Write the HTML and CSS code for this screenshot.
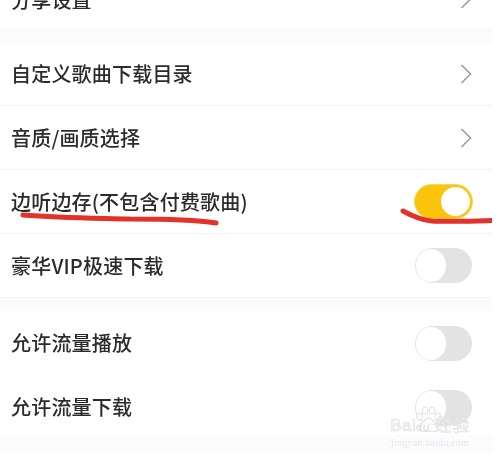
FILE: index.html
```html
<!DOCTYPE html>
<html lang="zh-CN">
<head>
<meta charset="utf-8">
<title>设置</title>
<link rel="stylesheet" href="styles.css">
</head>
<body>
<main class="screen">
  <div class="row row-cut">
    <span class="label">分享设置</span>
    <svg class="chev" viewBox="0 0 12 20"><path d="M1.500 1 10.500 10 1.500 19"/></svg>
  </div>
  <div class="band"></div>
  <div class="row row-line row-top">
    <span class="label">自定义歌曲下载目录</span>
    <svg class="chev" viewBox="0 0 12 20"><path d="M1.500 1 10.500 10 1.500 19"/></svg>
  </div>
  <div class="row row-line">
    <span class="label">音质/画质选择</span>
    <svg class="chev" viewBox="0 0 12 20"><path d="M1.500 1 10.500 10 1.500 19"/></svg>
  </div>
  <div class="row row-line">
    <span class="label">边听边存(不包含付费歌曲)</span>
    <span class="toggle on"><span class="knob"></span></span>
  </div>
  <div class="row row-line">
    <span class="label">豪华VIP极速下载</span>
    <span class="toggle"><span class="knob"></span></span>
  </div>
  <div class="band band-short"></div>
  <div class="row">
    <span class="label">允许流量播放</span>
    <span class="toggle"><span class="knob"></span></span>
  </div>
  <div class="row row-last">
    <span class="label">允许流量下载</span>
    <span class="toggle"><span class="knob"></span></span>
  </div>
  <div class="band band-tail"></div>
  <svg class="ink" viewBox="0 0 492 460" aria-hidden="true">
    <path d="M23 215C60 218 90 218 130 219 160 219 190 219 216 223"/>
    <path d="M403 211C412 216 420 220 432 221 450 222 470 221 492 220.500"/>
  </svg>
  <div class="mark">
    <svg class="paw" viewBox="0 0 40 38" aria-hidden="true">
      <ellipse cx="8" cy="15" rx="4" ry="5"/><ellipse cx="16" cy="6" rx="4" ry="5"/>
      <ellipse cx="26" cy="6" rx="4" ry="5"/><ellipse cx="34" cy="15" rx="4" ry="5"/>
      <path d="M21 17C15 17 13 24 9 27 5 31 9 37 15 36 19 35 23 35 27 36 33 37 37 31 33 27 29 24 27 17 21 17Z"/>
    </svg>
    <div class="mark-main">Bai<span class="du">du</span> 经验</div>
    <div class="mark-sub">jingyan.baidu.com</div>
  </div>
</main>
</body>
</html>
```
FILE: styles.css
```css
html, body {
  margin: 0;
  padding: 0;
  background: #fff;
}
.screen {
  position: relative;
  width: 502px;
  height: 460px;
  overflow: hidden;
  background: #fff;
  font-family: "Noto Sans CJK SC", "Noto Sans", sans-serif;
  filter: blur(0.4px);
}
.band {
  width: 492px;
  height: 15px;
  background: #fbfbfb;
}
.band-short {
  height: 13px;
}
.band-tail {
  height: 18px;
  background: #fcfbfd;
}
.row {
  display: flex;
  flex: none;
  align-items: center;
  justify-content: space-between;
  box-sizing: border-box;
  width: 492px;
  height: 64px;
  padding: 0 20px 0 11px;
  background: #fff;
}
.row-line {
  border-bottom: 1px solid #f3f3f3;
}
.row-top {
  height: 63px;
}
.row-cut {
  height: 28px;
  overflow: hidden;
  align-items: flex-start;
}
.row-cut .label {
  margin-top: -14px;
}
.row-cut .chev {
  margin-top: -11px;
}
.row-last {
  height: 60px;
  padding-top: 4px;
}
.label {
  font-size: 20px;
  font-weight: 500;
  line-height: 28px;
  color: #2b2b2b;
  letter-spacing: 0.2px;
  white-space: nowrap;
}
.chev {
  flex: none;
  width: 12px;
  height: 20px;
  fill: none;
  stroke: #a0a0a0;
  stroke-width: 1.7;
}
.toggle {
  display: flex;
  flex: none;
  justify-content: flex-start;
  box-sizing: border-box;
  width: 57px;
  height: 35px;
  border-radius: 18px;
  background: #e3e3e3;
  padding: 1px;
}
.knob {
  width: 30px;
  height: 33px;
  border-radius: 50%;
  background: #fff;
}
.toggle.on {
  justify-content: flex-end;
  width: 59px;
  margin-right: -1px;
  background: #fcc40a;
  padding: 2px;
  border: 1px solid #f3d95a;
}
.toggle.on .knob {
  width: 29px;
  height: 29px;
}
.ink {
  position: absolute;
  left: 0;
  top: 0;
  width: 492px;
  height: 460px;
  fill: none;
  stroke: #e2322a;
  stroke-width: 5;
  stroke-linecap: round;
}
.mark {
  position: absolute;
  left: 384px;
  top: 416px;
  width: 92px;
  color: #f5f5f5;
  text-align: center;
}
.paw {
  position: absolute;
  left: 30px;
  top: -10px;
  width: 28px;
  height: 27px;
  fill: rgba(255, 255, 255, 0.4);
  stroke: #e2e2e2;
  stroke-width: 1.500;
}
.mark-main {
  position: relative;
  font-family: "Liberation Sans", "Noto Sans CJK SC", sans-serif;
  font-size: 17px;
  line-height: 20px;
  letter-spacing: 0.5px;
  white-space: nowrap;
  -webkit-text-stroke: 0.5px #dcdcdc;
}
.du {
  font-size: 11px;
}
.mark-sub {
  position: relative;
  font-family: "Liberation Serif", serif;
  font-size: 10px;
  line-height: 12px;
  letter-spacing: 0.2px;
  color: #e6e6e6;
  white-space: nowrap;
}
```
